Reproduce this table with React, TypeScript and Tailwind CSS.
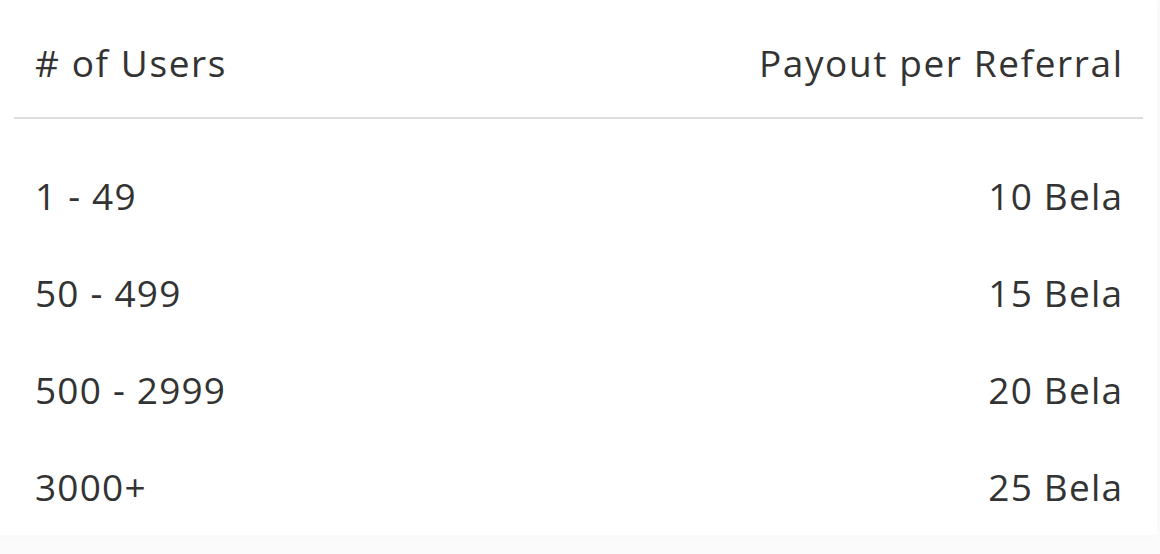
import React from 'react';

const ROWS = [
  { users: '1 - 49', payout: '10 Bela' },
  { users: '50 - 499', payout: '15 Bela' },
  { users: '500 - 2999', payout: '20 Bela' },
  { users: '3000+', payout: '25 Bela' },
];

export default function App() {
  return (
    <div className="min-h-screen w-full bg-[#fbfbfb] font-['Open_Sans','Lato',sans-serif] text-[#333333]">
      <div className="w-[1157px] bg-white px-[14px] shadow-[0_0_14px_rgba(0,0,0,0.025)]">
        <div className="flex items-center justify-between border-b-2 border-[#dddddd] px-[21px] pt-[39px] pb-[30px] text-[37px] leading-[48px] tracking-[1.6px]">
          <span># of Users</span>
          <span className="-mr-[1.6px]">Payout per Referral</span>
        </div>
        <div className="pt-[28px]">
          {ROWS.map((r, i) => (
            <div key={i} className="flex h-[97px] items-center justify-between px-[21px] text-[37px] leading-[48px] tracking-[1.2px]">
              <span>{r.users}</span>
              <span className="-mr-[1.2px]">{r.payout}</span>
            </div>
          ))}
        </div>
      </div>
    </div>
  );
}
